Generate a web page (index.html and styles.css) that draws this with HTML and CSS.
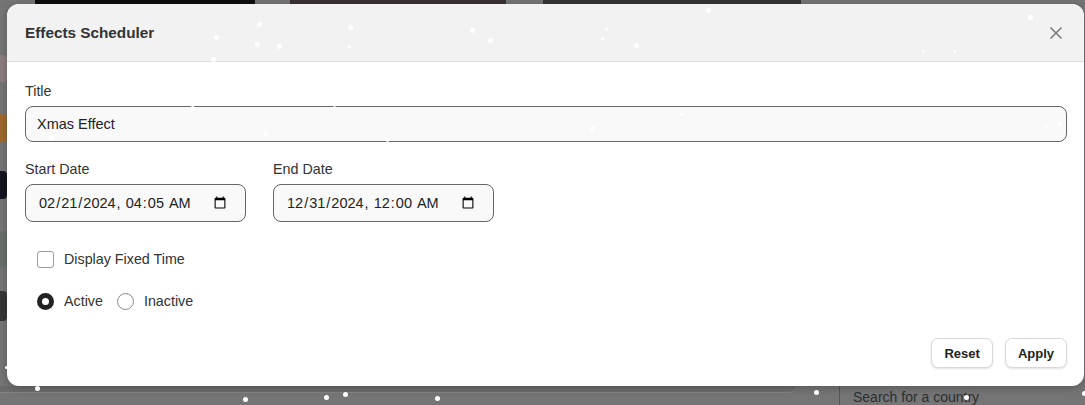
FILE: index.html
```html
<!DOCTYPE html>
<html lang="en">
<head>
<meta charset="utf-8">
<title>Effects Scheduler</title>
<link rel="stylesheet" href="styles.css">
</head>
<body>
<div class="page">
  <div class="top-row">
    <div class="tile tile-black"></div>
    <div class="tile tile-plum"></div>
    <div class="tile tile-dark"></div>
  </div>
  <div class="middle">
    <div class="side-strip">
      <span class="chip chip-rose"></span>
      <span class="chip chip-amber"></span>
      <span class="chip chip-ink"></span>
      <span class="chip chip-moss"></span>
      <span class="chip chip-coal"></span>
    </div>
  </div>
  <div class="bottom-row">
    <div class="panel-left"></div>
    <div class="search-side"><span class="search-text">Search for a country</span></div>
  </div>
</div>

<div class="modal">
  <div class="modal-header">
    <h1 class="modal-title">Effects Scheduler</h1>
    <button class="close-btn" aria-label="Close">
      <svg width="14" height="14" viewBox="0 0 14 14"><path d="M1.5 1.5 L12.5 12.5 M12.5 1.5 L1.5 12.5" stroke="#777" stroke-width="1.5" fill="none"/></svg>
    </button>
  </div>
  <div class="modal-body">
    <div class="field">
      <label class="label">Title</label>
      <input class="text-input" type="text" value="Xmas Effect">
    </div>
    <div class="date-row">
      <div class="field">
        <label class="label">Start Date</label>
        <input class="date-input" type="datetime-local" value="2024-02-21T04:05">
      </div>
      <div class="field">
        <label class="label">End Date</label>
        <input class="date-input" type="datetime-local" value="2024-12-31T00:00">
      </div>
    </div>
    <div class="options">
      <label class="check-row"><input type="checkbox" class="checkbox"><span>Display Fixed Time</span></label>
      <div class="radio-row">
        <label class="radio-item"><input type="radio" name="state" class="radio" checked><span>Active</span></label>
        <label class="radio-item"><input type="radio" name="state" class="radio"><span>Inactive</span></label>
      </div>
    </div>
  </div>
  <div class="modal-footer">
    <button class="btn">Reset</button>
    <button class="btn">Apply</button>
  </div>
</div>

<div class="snow">
  <i style="left:257px;top:22px"></i>
  <i style="left:348px;top:25px"></i>
  <i style="left:214px;top:35px"></i>
  <i style="left:255px;top:42px"></i>
  <i style="left:277px;top:44px"></i>
  <i style="left:348px;top:45px;width:3px;height:3px"></i>
  <i style="left:211px;top:57px"></i>
  <i style="left:470px;top:28px"></i>
  <i style="left:488px;top:38px"></i>
  <i style="left:601px;top:37px;width:3px;height:3px"></i>
  <i style="left:605px;top:28px;width:3px;height:3px"></i>
  <i style="left:634px;top:43px"></i>
  <i style="left:706px;top:8px"></i>
  <i style="left:689px;top:68px"></i>
  <i style="left:784px;top:64px;width:3px;height:3px"></i>
  <i style="left:922px;top:50px;width:3px;height:3px"></i>
  <i style="left:953px;top:50px;width:3px;height:3px"></i>
  <i style="left:1028px;top:15px"></i>
  <i style="left:1052px;top:250px;width:3px;height:3px"></i>
  <i style="left:190px;top:106px"></i>
  <i style="left:333px;top:106px;width:3px;height:3px"></i>
  <i style="left:263px;top:131px"></i>
  <i style="left:49px;top:136px"></i>
  <i style="left:386px;top:139px;width:3px;height:3px"></i>
  <i style="left:590px;top:126px"></i>
  <i style="left:680px;top:113px;width:3px;height:3px"></i>
  <i style="left:1057px;top:122px"></i>
  <i style="left:1044px;top:125px;width:3px;height:3px"></i>
  <i style="left:5px;top:366px;width:3px;height:3px"></i>
  <i style="left:35px;top:386px"></i>
  <i style="left:243px;top:397px"></i>
  <i style="left:324px;top:395px"></i>
  <i style="left:343px;top:392px"></i>
  <i style="left:435px;top:396px"></i>
  <i style="left:814px;top:390px"></i>
  <i style="left:964px;top:395px"></i>
  <i style="left:1082px;top:391px"></i>
</div>
</body>
</html>
```
FILE: styles.css
```css
* { box-sizing: border-box; }

html, body {
  margin: 0;
  padding: 0;
  width: 1085px;
  height: 405px;
  overflow: hidden;
  font-family: "Liberation Sans", Arial, sans-serif;
}

/* ---------- background page (dimmed) ---------- */
.page {
  height: 405px;
  background: #757575;
  display: flex;
  flex-direction: column;
}

.top-row {
  display: flex;
  height: 40px;
  padding-left: 35px;
  gap: 35px;
}
.tile { height: 40px; }
.tile-black { width: 220px; background: #0e0e0e; }
.tile-plum { width: 216px; background: #3a3035; }
.tile-dark { width: 258px; background: #343434; margin-left: 2px; }

.middle {
  flex: 1;
  display: flex;
}
.side-strip {
  width: 7px;
  display: flex;
  flex-direction: column;
  padding-top: 15px;
  gap: 32px;
}
.chip { display: block; width: 7px; height: 27px; border-radius: 0 4px 4px 0; }
.chip-rose { background: #8b7d80; }
.chip-amber { background: #9c6a2c; height: 28px; }
.chip-ink { background: #141420; height: 28px; margin-top: -3px; }
.chip-moss { background: #6a706a; height: 36px; }
.chip-coal { background: #363636; height: 30px; margin-top: -8px; }

.bottom-row {
  height: 19px;
  display: flex;
}
.panel-left {
  width: 796px;
  height: 7px;
  background: #6c6c6c;
  border-bottom: 1px solid #848484;
  border-radius: 0 0 10px 0;
}
.search-side {
  margin-left: 43px;
  flex: 1;
  border-left: 1px solid #555;
  padding-left: 13px;
  padding-top: 2px;
}
.search-text {
  font-size: 14px;
  color: #2e2e2e;
}

/* ---------- modal ---------- */
.modal {
  position: absolute;
  left: 7px;
  top: 4px;
  width: 1077px;
  height: 382px;
  background: #ffffff;
  border-radius: 12px;
  overflow: hidden;
  display: flex;
  flex-direction: column;
  box-shadow: 0 2px 8px rgba(0, 0, 0, 0.25);
}

.modal-header {
  height: 58px;
  flex: none;
  background: #f2f2f2;
  border-bottom: 1px solid #dcdcdc;
  display: flex;
  align-items: center;
  justify-content: space-between;
  padding: 0 18px 0 18px;
}
.modal-title {
  margin: 0;
  font-size: 15.3px;
  font-weight: bold;
  color: #333;
}
.close-btn {
  border: 0;
  background: transparent;
  padding: 0;
  width: 20px;
  height: 20px;
  display: flex;
  align-items: center;
  justify-content: center;
  margin-top: 1px;
}

.modal-body {
  flex: 1;
  padding: 21px 17px 0 18px;
  display: flex;
  flex-direction: column;
}

.field {
  display: flex;
  flex-direction: column;
}
.label {
  font-size: 14.3px;
  color: #333;
  line-height: 16px;
  margin-bottom: 7px;
}

.text-input {
  height: 36px;
  border: 1px solid #666;
  border-radius: 8px;
  background: #f9f9f9;
  padding: 0 11px;
  font-family: "Liberation Sans", Arial, sans-serif;
  font-size: 14.5px;
  color: #222;
  outline: none;
}

.date-row {
  display: flex;
  gap: 27px;
  margin-top: 19px;
}
.date-input {
  width: 221px;
  height: 38px;
  border: 1px solid #666;
  border-radius: 8px;
  background: #f9f9f9;
  padding: 0 16px 0 12px;
  font-family: "Liberation Sans", Arial, sans-serif;
  font-size: 14.5px;
  color: #222;
  outline: none;
}

.options {
  display: flex;
  flex-direction: column;
  padding-left: 12px;
  margin-top: 29px;
  gap: 25px;
}
.check-row, .radio-item {
  display: flex;
  align-items: center;
  gap: 10px;
  font-size: 14.3px;
  color: #333;
  line-height: 17px;
}
.radio-row {
  display: flex;
  gap: 14px;
}

.checkbox {
  appearance: none;
  -webkit-appearance: none;
  margin: 0;
  width: 17px;
  height: 17px;
  border: 1px solid #9a9a9a;
  border-radius: 3px;
  background: #fff;
}
.radio {
  appearance: none;
  -webkit-appearance: none;
  margin: 0;
  width: 17px;
  height: 17px;
  border: 1px solid #8a8a8a;
  border-radius: 50%;
  background: #fff;
}
.radio:checked {
  border: 5px solid #222;
}

.modal-footer {
  flex: none;
  display: flex;
  justify-content: flex-end;
  gap: 12px;
  padding: 0 17px 18px 0;
}
.btn {
  height: 30px;
  padding: 0 12px;
  background: #fff;
  border: 1px solid #d8d8d8;
  border-radius: 7px;
  box-shadow: 0 1px 2px rgba(0, 0, 0, 0.12);
  font-family: "Liberation Sans", Arial, sans-serif;
  font-size: 13px;
  font-weight: bold;
  color: #222;
}

/* ---------- snow overlay ---------- */
.snow {
  position: absolute;
  inset: 0;
  pointer-events: none;
}
.snow i {
  position: absolute;
  width: 5px;
  height: 5px;
  border-radius: 50%;
  background: #fff;
}
```
